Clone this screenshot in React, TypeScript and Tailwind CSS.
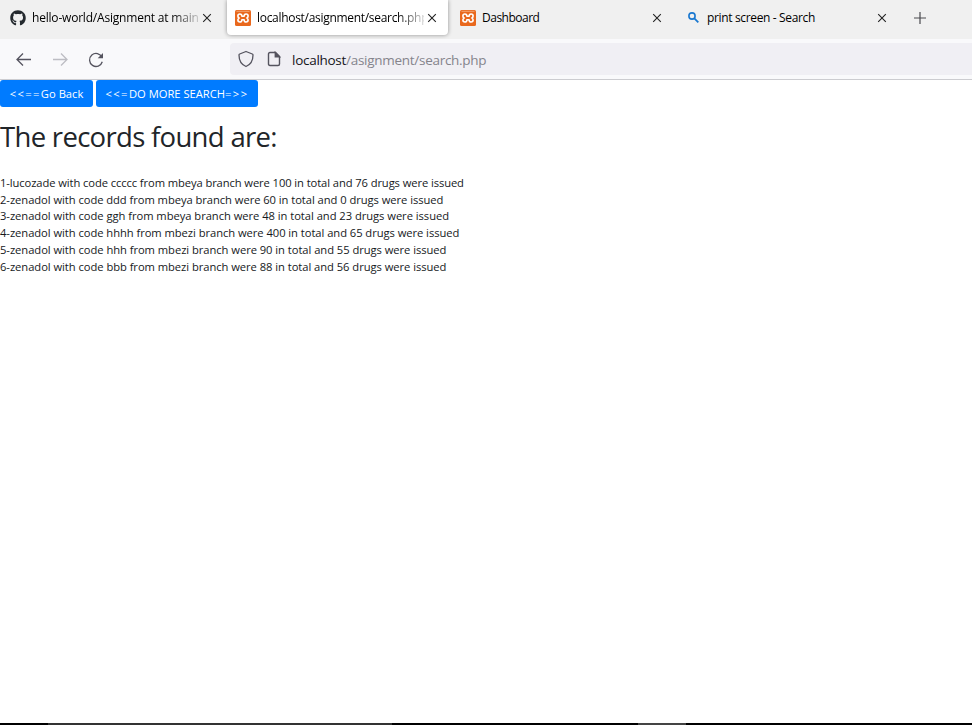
import React from "react";
import { FaGithub } from "react-icons/fa";

const records = [
  { text: "1-lucozade with code ccccc from mbeya branch were 100 in total and 76 drugs were issued", cls: "h-[17px] tracking-[-0.092px]" },
  { text: "2-zenadol with code ddd from mbeya branch were 60 in total and 0 drugs were issued", cls: "h-4 tracking-[-0.05px]" },
  { text: "3-zenadol with code ggh from mbeya branch were 48 in total and 23 drugs were issued", cls: "h-[17px] tracking-[-0.04px]" },
  { text: "4-zenadol with code hhhh from mbezi branch were 400 in total and 65 drugs were issued", cls: "h-[17px] tracking-[-0.048px]" },
  { text: "5-zenadol with code hhh from mbezi branch were 90 in total and 55 drugs were issued", cls: "h-[17px] tracking-[-0.045px]" },
  { text: "6-zenadol with code bbb from mbezi branch were 88 in total and 56 drugs were issued", cls: "h-[17px] tracking-[-0.045px]" },
];

function XamppIcon() {
  return (
    <svg width="16" height="16" viewBox="0 0 16 16" className="shrink-0">
      <rect width="16" height="16" rx="1.5" fill="#e9681d" />
      <path d="M1.5 1.300h13" stroke="#f6b58c" strokeWidth="0.8" />
      <path
        d="M4.900 4C3.500 4 2.900 4.900 2.900 5.900c0 1 .5 1.700 1.200 2.100-.7.400-1.200 1.100-1.200 2.100 0 1.100.6 1.900 2 1.900 1.600 0 2-.9 2-2.300h2.200c0 1.400.4 2.300 2 2.300 1.400 0 2-.8 2-1.900 0-1-.5-1.700-1.200-2.100.7-.4 1.200-1.100 1.200-2.100 0-1-.6-1.900-2-1.900-1.600 0-2 .9-2 2.300H6.900C6.900 4.900 6.500 4 4.900 4z"
        fill="none"
        stroke="#fff"
        strokeWidth="1.600"
        strokeLinejoin="round"
      />
    </svg>
  );
}

function Close() {
  return (
    <svg width="10" height="10" viewBox="0 0 10 10" className="shrink-0" fill="none" stroke="#222" strokeWidth="1.1">
      <path d="M1.200 1.200l7.600 7.600M8.800 1.200L1.200 8.800" />
    </svg>
  );
}

export default function App() {
  return (
    <div className="flex h-[725px] w-[972px] flex-col overflow-hidden bg-white font-['Open_Sans','Noto_Sans',sans-serif]">
      <div className="flex h-[39px] shrink-0 bg-[#f0f0f0] text-[12px] text-black">
        <div className="flex h-[35px] w-[227px] items-center pl-[10px]">
          <FaGithub size={16} color="#24292e" className="shrink-0" />
          <span className="ml-[6px] w-[167px] overflow-hidden whitespace-nowrap tracking-[-0.2px] [mask-image:linear-gradient(to_right,black_140px,transparent_172px)]">
            hello-world/Asignment at main
          </span>
          <span className="ml-[3px]"><Close /></span>
        </div>
        <div className="flex h-[35px] w-[221px] items-center rounded-b-[4px] bg-white pl-2 shadow-[0_0_4px_rgba(0,0,0,0.4)]">
          <XamppIcon />
          <span className="ml-[6px] w-[167px] overflow-hidden whitespace-nowrap tracking-[-0.3px] [mask-image:linear-gradient(to_right,black_140px,transparent_172px)]">
            localhost/asignment/search.php
          </span>
          <span className="ml-[3px]"><Close /></span>
        </div>
        <div className="flex h-[35px] w-[229px] items-center pl-3">
          <XamppIcon />
          <span className="ml-[6px] w-[167px] whitespace-nowrap tracking-[-0.5px]">Dashboard</span>
          <span className="ml-[3px]"><Close /></span>
        </div>
        <div className="flex h-[35px] flex-1 items-center pl-[11px]">
          <svg width="11" height="11" viewBox="0 0 11 11" fill="none" stroke="#1a78d0" className="shrink-0">
            <circle cx="4" cy="4" r="3.100" strokeWidth="1.600" />
            <path d="M6.300 6.300L10.300 10.300" strokeWidth="1.800" />
          </svg>
          <span className="ml-2 w-[170px] whitespace-nowrap tracking-[-0.35px]">print screen - Search</span>
          <Close />
          <svg width="12" height="12" viewBox="0 0 12 12" className="ml-[27px]" fill="none" stroke="#4a4a4f" strokeWidth="1.200">
            <path d="M6 0v12M0 6h12" />
          </svg>
        </div>
      </div>
      <div className="flex h-[41px] shrink-0 items-center border-b border-[#ccccd0] bg-[#f9f9fb]">
        <svg width="230" height="40" viewBox="0 0 230 40" fill="none" strokeWidth="1.300" className="shrink-0">
          <path d="M31 20.500H17.500M23 14.500l-6 6 6 6" stroke="#55545f" />
          <path d="M53 20.500h13.500M61 14.500l6 6-6 6" stroke="#bdbdc3" />
          <path d="M102 18.300a6.500 6.500 0 1 0 .3 4.500" stroke="#55545f" />
          <path d="M103 14v5.300h-5.300z" fill="#55545f" />
        </svg>
        <div className="flex h-8 flex-1 items-center rounded-l-[4px] bg-[#f0eff4] pl-2">
          <svg width="16" height="18" viewBox="0 0 16 18" fill="none" stroke="#55545f" strokeWidth="1.300">
            <path d="M8 1.500l6.300 2.500c.5.200.7.500.7.900C15 10 12.500 14.500 8 16.500 3.500 14.500 1 10 1 4.900c0-.4.200-.7.700-.9z" strokeLinejoin="round" />
          </svg>
          <svg width="14" height="16" viewBox="0 0 14 16" className="ml-[13px]" fill="none" stroke="#55545f" strokeWidth="1.400">
            <path d="M3 1.500h5.500l4 4V13c0 1-.5 1.500-1.500 1.500H3c-1 0-1.500-.5-1.500-1.500V3c0-1 .5-1.500 1.500-1.500z" />
            <path d="M8.300 1.500v4.200h4.200z" fill="#55545f" />
          </svg>
          <span className="ml-[11px] mt-0.5 whitespace-nowrap text-[13.500px] tracking-[-0.28px] text-[#85848c]">
            <span className="text-[#15141a]">localhost</span>/asignment/search.php
          </span>
        </div>
      </div>
      <main className="min-h-0 flex-1 text-[#212529]">
        <div className="flex h-[27px] gap-[3px] whitespace-nowrap text-[11.200px] text-white">
          <button className="flex w-[93px] items-center justify-center rounded-[3px] bg-[#007bff] pt-0.5">
            <span className="tracking-[1.400px]">&lt;&lt;==</span>
            <span>Go Back</span>
          </button>
          <button className="flex w-[162px] items-center justify-center rounded-[3px] bg-[#007bff] pt-0.5">
            <span className="tracking-[1.400px]">&lt;&lt;=</span>
            <span>DO MORE SEARCH</span>
            <span className="tracking-[1.400px]">=&gt;&gt;</span>
          </button>
        </div>
        <h1 className="mt-[13px] h-[34px] whitespace-nowrap text-[27.500px] leading-[34px] tracking-[-0.690px]">The records found are:</h1>
        <div className="mt-5 text-[11.200px] leading-[17px] text-[#16191c]">
          {records.map((r) => (
            <p key={r.text} className={r.cls + " whitespace-nowrap"}>{r.text}</p>
          ))}
        </div>
      </main>
      <div className="flex h-0.5 shrink-0 bg-black">
        <div className="ml-12 w-[344px] bg-[#333]" />
        <div className="ml-[246px] w-12 bg-[#444]" />
      </div>
    </div>
  );
}
